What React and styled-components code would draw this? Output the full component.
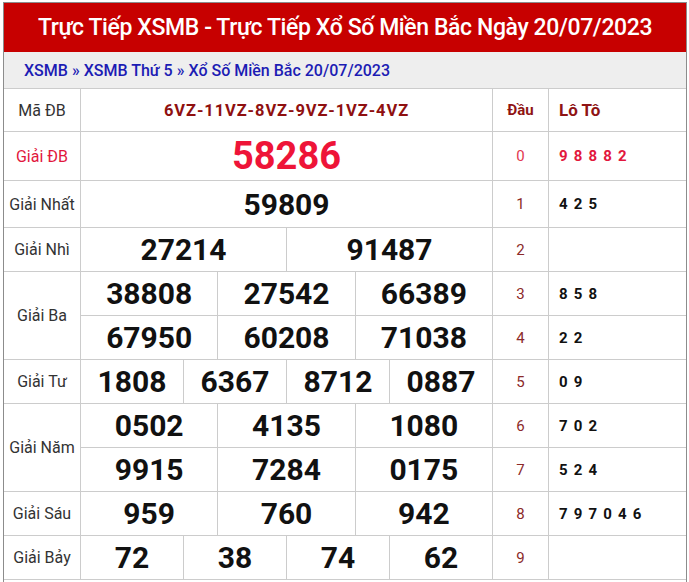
import React from "react";
import styled, { createGlobalStyle } from "styled-components";

const GlobalStyle = createGlobalStyle`
  body {
    margin: 0;
    background: #fff;
    font-family: Roboto, "Noto Sans", Arial, sans-serif;
  }
`;

const Frame = styled.div`
  box-sizing: border-box;
  width: 684px;
  margin: 2px 0 0 3px;
  border: 1px solid #8c8c8c;
  border-bottom: none;
  padding-bottom: 20px;
`;

const Title = styled.h1`
  box-sizing: border-box;
  margin: 0;
  height: 49px;
  background: #c70000;
  color: #fff;
  display: flex;
  align-items: center;
  justify-content: center;
  font-size: 23px;
  font-weight: 500;
  letter-spacing: -0.4px;
`;

const Crumbs = styled.nav`
  box-sizing: border-box;
  height: 37px;
  background: #eeeeee;
  border-bottom: 1px solid #cccccc;
  display: flex;
  align-items: center;
  padding-left: 20px;
  font-size: 16px;
  font-weight: 500;
  color: #1c1cb4;
`;

const Crumb = styled.a`
  color: inherit;
  text-decoration: none;
`;

const Sep = styled.span`
  margin: 0 4px;
`;

const Board = styled.div`
  display: grid;
  grid-template-columns: 77px 412px 56px 1fr;
  grid-template-rows: 43px 49px 47px repeat(8, 44px);
`;

const Cell = styled.div`
  box-sizing: border-box;
  border-bottom: 1px solid #cccccc;
  border-right: ${(p) => (p.$last ? "none" : "1px solid #cccccc")};
  display: flex;
  align-items: center;
  justify-content: ${(p) => (p.$left ? "flex-start" : "center")};
  padding-left: ${(p) => (p.$left ? "10px" : "0")};
  grid-row: ${(p) => (p.$span ? `span ${p.$span}` : "auto")};
  min-width: 0;
`;

const Label = styled(Cell)`
  font-size: 16px;
  color: ${(p) => (p.$special ? "#e2173d" : "#333333")};
`;

const Code = styled.span`
  font-size: 16.5px;
  font-weight: 700;
  color: #8f1010;
  letter-spacing: 0.9px;
`;

const HeadText = styled.span`
  font-size: ${(p) => p.$size || "15px"};
  font-weight: 700;
  color: #8f1414;
`;

const NumRow = styled.div`
  box-sizing: border-box;
  border-bottom: 1px solid #cccccc;
  border-right: 1px solid #cccccc;
  display: flex;
`;

const Num = styled.div`
  flex: 1;
  display: flex;
  align-items: center;
  justify-content: center;
  border-left: 1px solid #cccccc;
  &:first-child {
    border-left: none;
  }
  font-size: ${(p) => (p.$special ? "38px" : "30px")};
  font-weight: 700;
  color: ${(p) => (p.$special ? "#ee1438" : "#111111")};
`;

const Digit = styled.span`
  font-size: 15px;
  color: ${(p) => (p.$special ? "#e2374f" : "#8b2a2a")};
`;

const Loto = styled.span`
  font-size: 15px;
  font-weight: 700;
  letter-spacing: 1.2px;
  color: ${(p) => (p.$special ? "#e2173d" : "#111111")};
`;

const prizes = [
  { label: "Giải ĐB", special: true, lines: [["58286"]] },
  { label: "Giải Nhất", lines: [["59809"]] },
  { label: "Giải Nhì", lines: [["27214", "91487"]] },
  {
    label: "Giải Ba",
    lines: [
      ["38808", "27542", "66389"],
      ["67950", "60208", "71038"],
    ],
  },
  { label: "Giải Tư", lines: [["1808", "6367", "8712", "0887"]] },
  {
    label: "Giải Năm",
    lines: [
      ["0502", "4135", "1080"],
      ["9915", "7284", "0175"],
    ],
  },
  { label: "Giải Sáu", lines: [["959", "760", "942"]] },
  { label: "Giải Bảy", lines: [["72", "38", "74", "62"]] },
];

const loto = [
  "9 8 8 8 2",
  "4 2 5",
  "",
  "8 5 8",
  "2 2",
  "0 9",
  "7 0 2",
  "5 2 4",
  "7 9 7 0 4 6",
  "",
];

export default function App() {
  let idx = 0;
  const body = [];
  prizes.forEach((p) => {
    p.lines.forEach((line, li) => {
      const i = idx++;
      if (li === 0) {
        body.push(
          <Label key={`l${i}`} $span={p.lines.length} $special={p.special}>
            {p.label}
          </Label>
        );
      }
      body.push(
        <NumRow key={`n${i}`}>
          {line.map((n, k) => (
            <Num key={k} $special={p.special}>
              {n}
            </Num>
          ))}
        </NumRow>
      );
      body.push(
        <Cell key={`d${i}`}>
          <Digit $special={i === 0}>{i}</Digit>
        </Cell>
      );
      body.push(
        <Cell key={`t${i}`} $left $last>
          <Loto $special={i === 0}>{loto[i]}</Loto>
        </Cell>
      );
    });
  });

  return (
    <>
      <GlobalStyle />
      <Frame>
        <Title>Trực Tiếp XSMB - Trực Tiếp Xổ Số Miền Bắc Ngày 20/07/2023</Title>
        <Crumbs>
          <Crumb href="#">XSMB</Crumb>
          <Sep>»</Sep>
          <Crumb href="#">XSMB Thứ 5</Crumb>
          <Sep>»</Sep>
          <Crumb href="#">Xổ Số Miền Bắc 20/07/2023</Crumb>
        </Crumbs>
        <Board>
          <Label>Mã ĐB</Label>
          <Cell>
            <Code>6VZ-11VZ-8VZ-9VZ-1VZ-4VZ</Code>
          </Cell>
          <Cell>
            <HeadText>Đầu</HeadText>
          </Cell>
          <Cell $left $last>
            <HeadText $size="17px">Lô Tô</HeadText>
          </Cell>
          {body}
        </Board>
      </Frame>
    </>
  );
}
